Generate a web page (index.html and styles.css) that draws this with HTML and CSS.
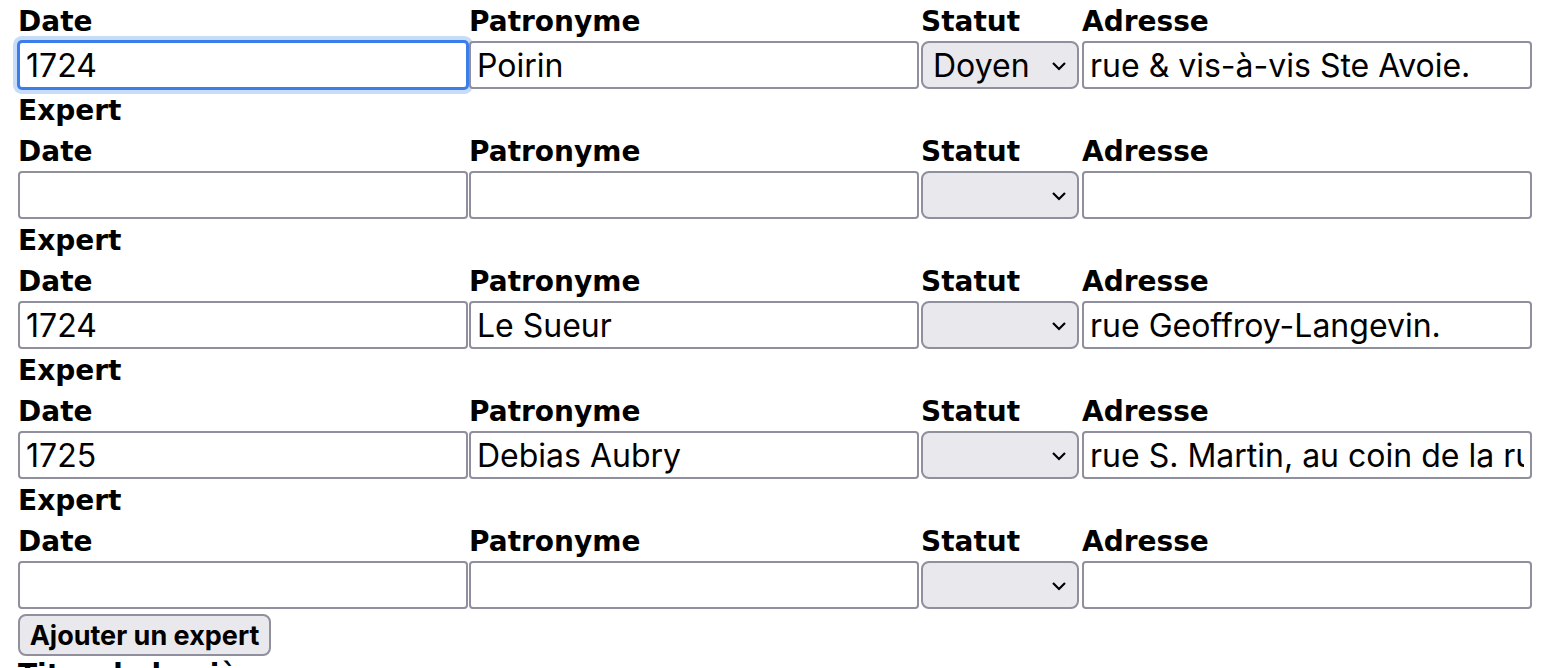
FILE: index.html
```html
<!DOCTYPE html>
<html lang="fr">
<head>
  <meta charset="UTF-8">
  <title>Experts</title>
  <link rel="stylesheet" href="styles.css">
</head>
<body>

  <form class="experts">
    <div class="row">
      <div class="field"><label>Date</label><input type="text" class="is-focused" value="1724"></div>
      <div class="field"><label>Patronyme</label><input type="text" value="Poirin"></div>
      <div class="field"><label>Statut</label>
        <div class="select-wrap">
          <select><option>Doyen</option></select>
          <svg class="chevron" width="16" height="10" viewBox="0 0 16 10"><path d="M2 2 L8 8 L14 2" fill="none" stroke="#000" stroke-width="2.2"/></svg>
        </div>
      </div>
      <div class="field"><label>Adresse</label><input type="text" value="rue &amp; vis-à-vis Ste Avoie."></div>
    </div>

    <div class="expert">
      <div class="expert-title">Expert</div>
      <div class="row">
        <div class="field"><label>Date</label><input type="text" value=""></div>
        <div class="field"><label>Patronyme</label><input type="text" value=""></div>
        <div class="field"><label>Statut</label>
          <div class="select-wrap">
            <select><option></option></select>
            <svg class="chevron" width="16" height="10" viewBox="0 0 16 10"><path d="M2 2 L8 8 L14 2" fill="none" stroke="#000" stroke-width="2.2"/></svg>
          </div>
        </div>
        <div class="field"><label>Adresse</label><input type="text" value=""></div>
      </div>
    </div>

    <div class="expert">
      <div class="expert-title">Expert</div>
      <div class="row">
        <div class="field"><label>Date</label><input type="text" value="1724"></div>
        <div class="field"><label>Patronyme</label><input type="text" value="Le Sueur"></div>
        <div class="field"><label>Statut</label>
          <div class="select-wrap">
            <select><option></option></select>
            <svg class="chevron" width="16" height="10" viewBox="0 0 16 10"><path d="M2 2 L8 8 L14 2" fill="none" stroke="#000" stroke-width="2.2"/></svg>
          </div>
        </div>
        <div class="field"><label>Adresse</label><input type="text" value="rue Geoffroy-Langevin."></div>
      </div>
    </div>

    <div class="expert">
      <div class="expert-title">Expert</div>
      <div class="row">
        <div class="field"><label>Date</label><input type="text" value="1725"></div>
        <div class="field"><label>Patronyme</label><input type="text" value="Debias Aubry"></div>
        <div class="field"><label>Statut</label>
          <div class="select-wrap">
            <select><option></option></select>
            <svg class="chevron" width="16" height="10" viewBox="0 0 16 10"><path d="M2 2 L8 8 L14 2" fill="none" stroke="#000" stroke-width="2.2"/></svg>
          </div>
        </div>
        <div class="field"><label>Adresse</label><input type="text" value="rue S. Martin, au coin de la rue aux Ours."></div>
      </div>
    </div>

    <div class="expert">
      <div class="expert-title">Expert</div>
      <div class="row">
        <div class="field"><label>Date</label><input type="text" value=""></div>
        <div class="field"><label>Patronyme</label><input type="text" value=""></div>
        <div class="field"><label>Statut</label>
          <div class="select-wrap">
            <select><option></option></select>
            <svg class="chevron" width="16" height="10" viewBox="0 0 16 10"><path d="M2 2 L8 8 L14 2" fill="none" stroke="#000" stroke-width="2.2"/></svg>
          </div>
        </div>
        <div class="field"><label>Adresse</label><input type="text" value=""></div>
      </div>
    </div>

    <button type="button" class="add-btn">Ajouter un expert</button>
    <div class="section-title">Titre de la pièce</div>
  </form>

</body>
</html>
```

FILE: styles.css
```css
body {
  margin: 0;
  padding: 3px 0 0 18px;
  font-family: "DejaVu Sans", Verdana, sans-serif;
  color: #000;
  background: #fff;
  overflow: hidden;
}

.row {
  display: grid;
  grid-template-columns: 451px 452px 161px 450px;
}

.field label {
  display: block;
  font-weight: bold;
  font-size: 28px;
  line-height: 38px;
}

.field input,
.field select {
  display: block;
  box-sizing: border-box;
  width: 450px;
  height: 48px;
  margin: 0;
  padding: 0 6px;
  font-family: Inter, "Liberation Sans", sans-serif;
  font-size: 32px;
  color: #000;
  background: #fff;
  border: 2px solid #8f8f9d;
  border-radius: 4px;
  outline: none;
}

.field input.is-focused {
  border-color: #3b7de9;
  box-shadow: 0 0 0 1px #3b7de9, 0 0 0 5px #c6dcf9;
}

.select-wrap {
  position: relative;
  width: 158px;
}

.field select {
  width: 158px;
  -webkit-appearance: none;
  appearance: none;
  background: #e9e9ed;
  border-radius: 8px;
  padding-left: 10px;
}

.chevron {
  position: absolute;
  right: 12px;
  top: 20px;
  pointer-events: none;
}

.expert-title {
  font-weight: bold;
  font-size: 28px;
  line-height: 44px;
}

.add-btn {
  display: block;
  box-sizing: border-box;
  margin-top: 5px;
  width: 253px;
  height: 42px;
  padding: 0 8px;
  font-family: Inter, "Liberation Sans", sans-serif;
  font-weight: bold;
  font-size: 27px;
  color: #000;
  background: #e9e9ed;
  border: 2px solid #8f8f9d;
  border-radius: 8px;
}

.section-title {
  margin-top: 3px;
  font-weight: bold;
  font-size: 28px;
  line-height: 32px;
}
```
